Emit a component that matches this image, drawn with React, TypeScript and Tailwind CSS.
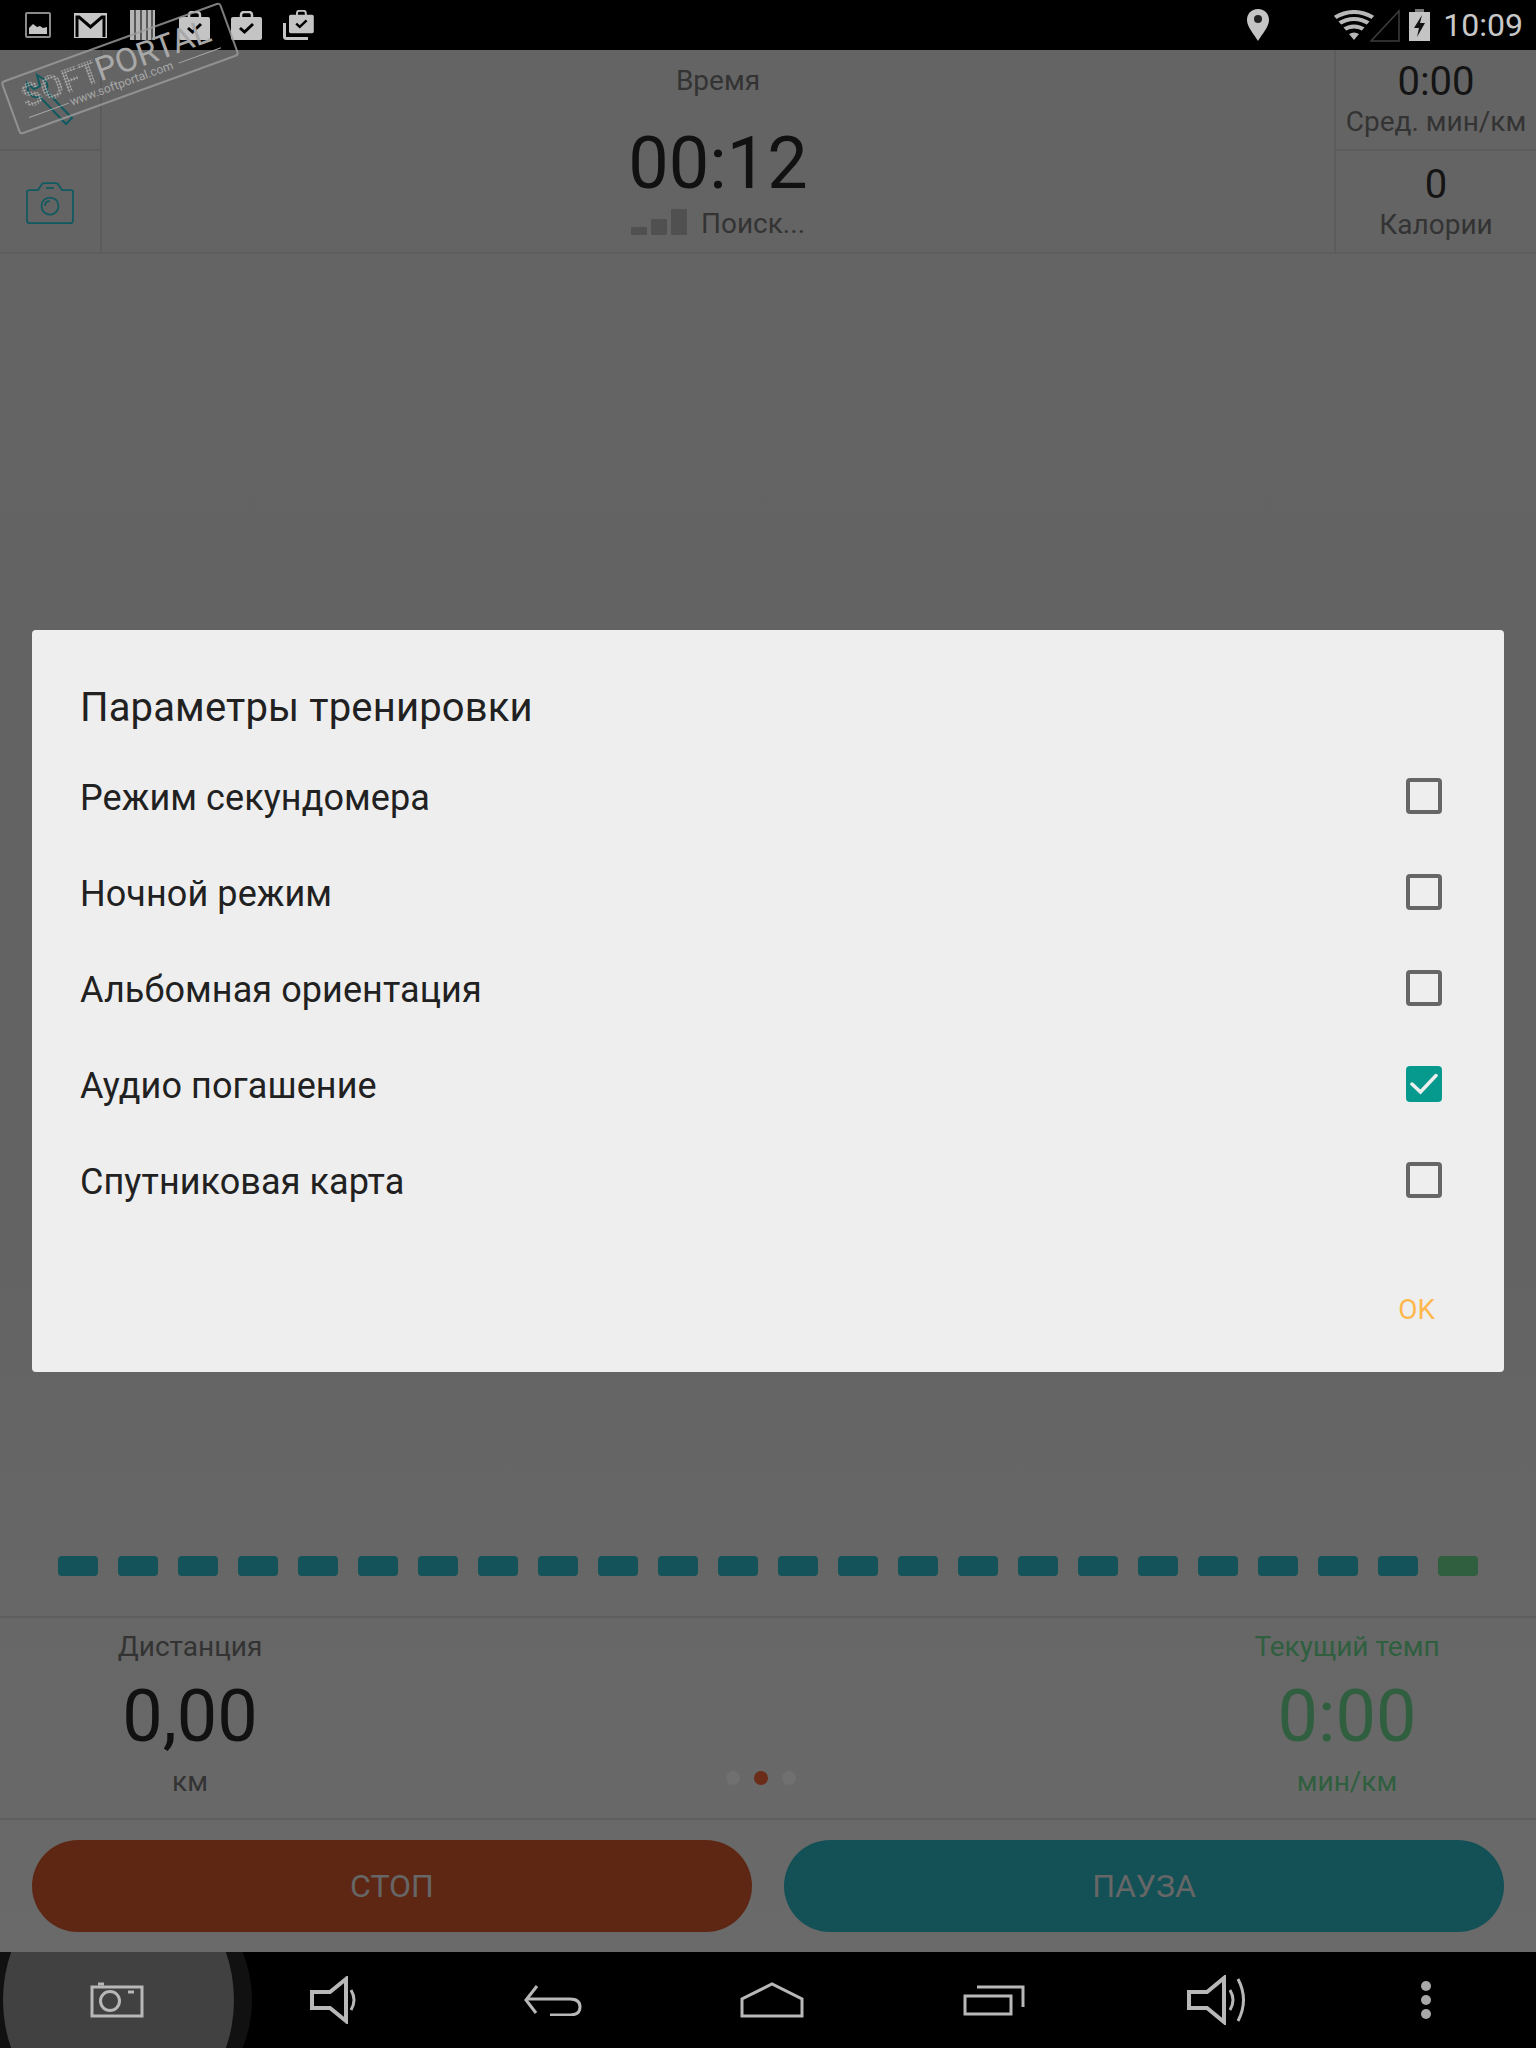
import * as React from 'react';

/* ========================= status bar icons ========================= */
function StatusLeftIcons() {
  return (
    <div className="flex items-center h-full">
      {/* picture */}
      <svg className="ml-[25px]" width="26" height="26" viewBox="0 0 26 26">
        <rect x="1" y="1" width="24" height="24" rx="1" fill="none" stroke="#8a8a8a" strokeWidth="2" />
        <path d="M4 22v-6l4-4 4 3 3-1 3 2 4-1v7z" fill="#c4c4c4" />
      </svg>
      {/* gmail */}
      <svg className="ml-[23px]" width="33" height="25" viewBox="0 0 33 25">
        <rect width="33" height="25" fill="#c6c6c6" />
        <path d="M3 24V4h2l11.500 10L28 4h2v20" fill="none" stroke="#000" strokeWidth="3" />
      </svg>
      {/* barcode */}
      <svg className="ml-[23px]" width="25" height="30" viewBox="0 0 25 30">
        <rect width="25" height="30" fill="#b4b4b4" />
        <path d="M5 0v30M11 0v30M17 0v30M22 0v30" stroke="#3a3a3a" strokeWidth="1.500" />
      </svg>
      <svg className="ml-[24px]" width="31" height="29" viewBox="0 0 31 29">
        <Briefcase />
      </svg>
      <svg className="ml-[21px]" width="31" height="29" viewBox="0 0 31 29">
        <Briefcase />
      </svg>
      <svg className="ml-[21px]" width="31" height="30" viewBox="0 0 31 30">
        <g transform="translate(6 0) scale(0.8)">
          <Briefcase />
        </g>
        <path d="M1.500 13v13.500q0 2 2 2H25" fill="none" stroke="#c4c4c4" strokeWidth="3" />
      </svg>
    </div>
  );
}

function Briefcase() {
  return (
    <>
      <path d="M10 7V4q0-3 3-3h5q3 0 3 3v3" fill="none" stroke="#c4c4c4" strokeWidth="2.500" />
      <rect y="6" width="31" height="23" rx="2" fill="#c4c4c4" />
      <path d="M9 17l4.500 4 8.500-8" fill="none" stroke="#000" strokeWidth="3" />
    </>
  );
}

function StatusRightIcons() {
  return (
    <div className="flex items-center h-full ml-auto">
      <svg width="22" height="32" viewBox="0 0 22 32">
        <path d="M11 0C4 0 0 5 0 11c0 7 7 14 11 21 4-7 11-14 11-21C22 5 18 0 11 0z" fill="#c4c4c4" />
        <circle cx="11" cy="10" r="4" fill="#222" />
      </svg>
      <svg className="ml-[65px]" width="40" height="30" viewBox="0 0 40 30">
        <clipPath id="wifi-fan">
          <path d="M0 6L20 30 40 6V0H0z" />
        </clipPath>
        <g fill="none" stroke="#b8b8b8" strokeWidth="4" clipPath="url(#wifi-fan)">
          <path d="M0 8q20-12 40 0" />
          <path d="M4 14q16-10 32 0" />
          <path d="M9 20q11-7 22 0" />
        </g>
        <path d="M15 24q5-3 10 0l-5 6z" fill="#b8b8b8" />
      </svg>
      <svg className="-ml-[4px]" width="30" height="33" viewBox="0 0 30 33">
        <path d="M1 32L29 2v30z" fill="none" stroke="#3d3d3d" strokeWidth="1.500" />
      </svg>
      <svg className="ml-[9px]" width="21" height="32" viewBox="0 0 21 32">
        <rect x="6" y="0" width="9" height="4" fill="#777" />
        <rect y="3" width="21" height="29" fill="#c4c4c4" />
        <path d="M13 6L5 19h5l-2 9 8-14h-5z" fill="#111" />
      </svg>
      <span className="ml-[13px] mr-[13px] text-[32px] leading-none text-[#c8c8c8]">10:09</span>
    </div>
  );
}

/* ========================= watermark ========================= */
function Watermark() {
  return (
    <div className="absolute left-[3px] top-[40px] w-[234px] h-[57px] -rotate-[20deg] rounded-[4px] border-2 border-[#9c9c9c]/80 pointer-events-none">
      <div className="absolute left-[13px] top-[4px] flex items-baseline text-[33px] leading-[33px]">
        <span className="w-[79px] font-bold bg-[radial-gradient(circle,#b4b4b4_0.9px,transparent_1.200px)] bg-[length:3px_3px] bg-clip-text text-transparent">
          SOFT
        </span>
        <span className="text-[#a8a8a8]">PORTAL</span>
      </div>
      <div className="absolute left-[13px] right-[13px] top-[35px] flex items-center gap-[2px] text-[12px] leading-[12px] text-[#a8a8a8]">
        <span className="h-px w-[42px] bg-[#a8a8a8]" />
        <span>www.softportal.com</span>
        <span className="h-px flex-1 ml-[4px] bg-[#a8a8a8]" />
      </div>
    </div>
  );
}

/* ========================= header ========================= */
function StatCell({ value, label, className = '' }: { value: string; label: string; className?: string }) {
  return (
    <div className={'flex flex-col items-center ' + className}>
      <div className="text-[40px] leading-[46px] text-[#141414]">{value}</div>
      <div className="text-[28px] leading-[33px] text-[#333333]">{label}</div>
    </div>
  );
}

function Header() {
  return (
    <div className="flex h-[204px] border-b-2 border-[#5e5e5e]">
      <div className="flex flex-col w-[102px] border-r-2 border-[#5c5c5c]">
        <div className="h-[101px] border-b-2 border-[#5c5c5c] flex items-center justify-center">
          <svg width="50" height="52" viewBox="0 0 50 52" className="-translate-y-[1px]">
            <path
              d="M12 2l8 5c3 3 3 8 1 11l26 27-6 6L15 24c-5 1-10-1-12-6L2 10l7 6 6-3z"
              fill="none"
              stroke="#0f5a60"
              strokeWidth="2"
            />
          </svg>
        </div>
        <div className="flex-1 flex items-center justify-center pt-[3px]">
          <svg width="48" height="42" viewBox="0 0 48 42" fill="none" stroke="#0f5a60" strokeWidth="1.750">
            <path d="M3 8h9l4-6q1-1 3-1h10q2 0 3 1l4 6h9q2 0 2 2v28q0 3-2 3H3q-2 0-2-3V10q0-2 2-2z" />
            <circle cx="24" cy="24" r="8.500" />
            <path d="M19 24q0-5 5-5" />
            <path d="M20 6h8" />
          </svg>
        </div>
      </div>

      <div className="flex-1 flex flex-col items-center">
        <div className="mt-[14px] text-[28px] leading-[33px] text-[#333333]">Время</div>
        <div className="mt-[25px] text-[72px] leading-[84px] text-[#111111]">00:12</div>
        <div className="flex items-end h-[33px] mt-[1px]">
          <div className="flex items-end gap-[4px] mb-[5px]">
            <span className="w-[16px] h-[8px] rounded-[1px] bg-[#505050]" />
            <span className="w-[16px] h-[16px] rounded-[1px] bg-[#505050]" />
            <span className="w-[16px] h-[26px] rounded-[1px] bg-[#505050]" />
          </div>
          <span className="ml-[14px] text-[28px] leading-[33px] text-[#333333]">Поиск...</span>
        </div>
      </div>

      <div className="flex flex-col w-[202px] border-l-2 border-[#5c5c5c]">
        <StatCell className="h-[101px] pt-[9px] border-b-2 border-[#5c5c5c]" value="0:00" label="Сред. мин/км" />
        <StatCell className="flex-1 pt-[11px]" value="0" label="Калории" />
      </div>
    </div>
  );
}

/* ========================= progress + metrics ========================= */
const segments = Array.from({ length: 24 }, (_, i) => i);

function Segments() {
  return (
    <div className="flex gap-[20px] pl-[58px] mt-auto">
      {segments.map((i) => (
        <span key={i} className={'w-[40px] h-[20px] rounded-[4px] ' + (i === 23 ? 'bg-[#2f5f3f]' : 'bg-[#14535a]')} />
      ))}
    </div>
  );
}

function Metric({ title, value, unit, titleColor, valueColor }: { title: string; value: string; unit: string; titleColor: string; valueColor: string }) {
  return (
    <div className="flex flex-col items-center">
      <div className={'text-[28px] leading-[33px] ' + titleColor}>{title}</div>
      <div className={'mt-[12px] text-[72px] leading-[84px] ' + valueColor}>{value}</div>
      <div className={'text-[28px] leading-[33px] mt-[6px] ' + titleColor}>{unit}</div>
    </div>
  );
}

function Metrics() {
  return (
    <div className="flex h-[204px] mt-[40px] border-t-2 border-b-2 border-[#5e5e5e] pt-[12px]">
      <div className="w-[380px] flex justify-center">
        <Metric title="Дистанция" value="0,00" unit="км" titleColor="text-[#333333]" valueColor="text-[#111111]" />
      </div>
      <div className="flex-1 flex items-center justify-center gap-[14px] pt-[108px] pr-[16px]">
        <span className="w-[14px] h-[14px] rounded-full bg-[#707070]" />
        <span className="w-[14px] h-[14px] rounded-full bg-[#6b2c18]" />
        <span className="w-[14px] h-[14px] rounded-full bg-[#707070]" />
      </div>
      <div className="w-[378px] flex justify-center">
        <Metric title="Текущий темп" value="0:00" unit="мин/км" titleColor="text-[#2f5f3f]" valueColor="text-[#2f5f3f]" />
      </div>
    </div>
  );
}

function Buttons() {
  return (
    <div className="flex gap-[32px] px-[32px] py-[20px]">
      <div className="flex-1 h-[92px] rounded-full bg-[#5e2714] flex items-center justify-center text-[32px] text-[#666666]">
        СТОП
      </div>
      <div className="flex-1 h-[92px] rounded-full bg-[#145157] flex items-center justify-center text-[32px] text-[#666666]">
        ПАУЗА
      </div>
    </div>
  );
}

/* ========================= nav bar ========================= */
function NavBar() {
  return (
    <div className="relative h-[96px] bg-black overflow-hidden shrink-0">
      <div className="absolute left-[-14px] top-[-82px] w-[266px] h-[260px] rounded-[50%] bg-[#111111]" />
      <div className="absolute left-[3px] top-[-82px] w-[231px] h-[260px] rounded-[50%] bg-[#414141]" />
      <div className="relative flex items-center h-full text-[#b8b8b8]">
        <svg className="ml-[90px]" width="54" height="36" viewBox="0 0 54 36" fill="none" stroke="currentColor" strokeWidth="3">
          <path d="M2 5h50v29H2z" />
          <circle cx="20" cy="19" r="9.500" />
          <path d="M38 10h6M8 2h6" />
        </svg>
        <svg className="ml-[166px]" width="50" height="48" viewBox="0 0 50 48" fill="none" stroke="currentColor" strokeWidth="4">
          <path d="M2 16h18L36 3v42L20 32H2z" />
          <path d="M41 14q6 10 0 20" strokeWidth="3" />
        </svg>
        <svg className="ml-[164px]" width="58" height="32" viewBox="0 0 58 32" fill="none" stroke="currentColor" strokeWidth="3">
          <path d="M13 2L2 16l10 13" />
          <path d="M2 15h44q10 0 10 8t-10 8H26" />
        </svg>
        <svg className="ml-[158px]" width="64" height="36" viewBox="0 0 64 36" fill="none" stroke="currentColor" strokeWidth="3">
          <path d="M2 34V17L32 2l30 15v17z" />
        </svg>
        <svg className="ml-[159px]" width="62" height="32" viewBox="0 0 62 32" fill="none" stroke="currentColor" strokeWidth="3">
          <path d="M2 12h46v18H2z" />
          <path d="M14 3h46v20" />
        </svg>
        <svg className="ml-[162px]" width="62" height="50" viewBox="0 0 62 50" fill="none" stroke="currentColor" strokeWidth="4">
          <path d="M2 17h18L37 3v44L20 33H2z" />
          <path d="M43 15q6 10 0 20" strokeWidth="3" />
          <path d="M51 4q11 21 0 42" strokeWidth="3" />
        </svg>
        <div className="ml-[172px] flex flex-col gap-[4px]">
          <span className="w-[10px] h-[10px] rounded-full bg-[#a8a8a8]" />
          <span className="w-[10px] h-[10px] rounded-full bg-[#a8a8a8]" />
          <span className="w-[10px] h-[10px] rounded-full bg-[#a8a8a8]" />
        </div>
      </div>
    </div>
  );
}

/* ========================= dialog ========================= */
const options = [
  { label: 'Режим секундомера', checked: false },
  { label: 'Ночной режим', checked: false },
  { label: 'Альбомная ориентация', checked: false },
  { label: 'Аудио погашение', checked: true },
  { label: 'Спутниковая карта', checked: false },
];

function Checkbox({ checked }: { checked: boolean }) {
  if (checked) {
    return (
      <span className="w-[36px] h-[36px] rounded-[4px] bg-[#069a8e] flex items-center justify-center">
        <svg width="28" height="22" viewBox="0 0 28 22" fill="none" stroke="#eeeeee" strokeWidth="3.500" strokeLinecap="round">
          <path d="M2 11l8.500 8L26 2.500" />
        </svg>
      </span>
    );
  }
  return <span className="w-[36px] h-[36px] rounded-[4px] border-[4px] border-[#666666]" />;
}

function SettingsDialog() {
  return (
    <div className="absolute left-0 right-0 top-[50px] bottom-[96px] flex items-center px-[32px]">
      <div className="w-full h-[742px] rounded-[4px] bg-[#eeeeee] flex flex-col">
        <div className="px-[48px] pt-[54px] h-[118px] text-[40px] leading-[47px] tracking-[0.15px] text-[#212121]">Параметры тренировки</div>
        {options.map((o) => (
          <div key={o.label} className="h-[96px] pl-[48px] pr-[62px] flex items-center justify-between text-[36px] tracking-[0.08px] text-[#212121]">
            <span className="mt-[4px]">{o.label}</span>
            <Checkbox checked={o.checked} />
          </div>
        ))}
        <div className="flex justify-end pr-[69px] pt-[65px] text-[28px] leading-[33px] text-[#ffb84d]">OK</div>
      </div>
    </div>
  );
}

export default function App() {
  return (
    <div className="relative w-[1536px] h-[2048px] overflow-hidden flex flex-col font-['Roboto',sans-serif] bg-gradient-to-b from-[#646464] via-[#636363] via-60% to-[#6b6b6b]">
      <div className="flex h-[50px] bg-black shrink-0">
        <StatusLeftIcons />
        <StatusRightIcons />
      </div>
      <Header />
      <div className="flex-1 flex flex-col">
        <Segments />
        <Metrics />
        <Buttons />
      </div>
      <NavBar />
      <SettingsDialog />
      <Watermark />
    </div>
  );
}
